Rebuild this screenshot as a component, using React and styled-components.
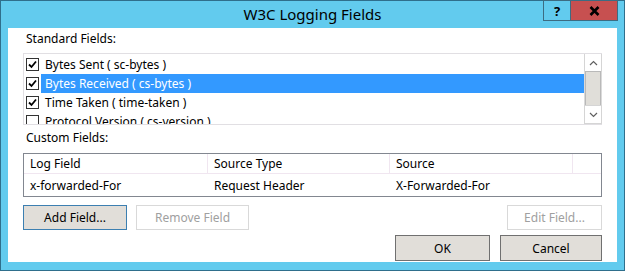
import React from 'react'
import styled, { createGlobalStyle } from 'styled-components'

/* Styled components: Start */

const Global = createGlobalStyle`
    body {
        margin: 0;
        font-family: 'Noto Sans', 'Open Sans', sans-serif;
        font-size: 12px;
        color: #000;
    }
`

const Window = styled.div`
    width: 625px;
    height: 271px;
    box-sizing: border-box;
    background: #62cbee;
    border: 1px solid #2f6f8c;
    display: flex;
    flex-direction: column;
`

const TitleBar = styled.div`
    height: 27px;
    display: grid;
    grid-template-columns: 1fr auto 1fr;
    align-items: start;
`

const Title = styled.div`
    grid-column: 2;
    font-size: 15px;
    line-height: 27px;
    color: #000;
`

const Caption = styled.div`
    grid-column: 3;
    justify-self: end;
    display: flex;
    margin-top: -1px;
    margin-right: 6px;
`

const CaptionButton = styled.div`
    width: ${({ wide }) => (wide ? 47 : 28)}px;
    height: 21px;
    box-sizing: border-box;
    background: ${({ wide }) => (wide ? '#c75050' : '#62cbee')};
    border: 1px solid #3c6c82;
    border-left-width: ${({ wide }) => (wide ? 0 : 1)}px;
    display: flex;
    align-items: center;
    justify-content: center;
    font-weight: bold;
    font-size: 13px;
`

const Panel = styled.div`
    margin: 0 7px;
    height: 234px;
    background: #fff;
    padding: 0 15px;
    display: flex;
    flex-direction: column;
`

const Label = styled.div`
    padding-left: 3px;
    line-height: 17px;
    margin-top: ${({ top }) => top}px;
`

const ListBox = styled.div`
    margin-top: 6px;
    height: 72px;
    box-sizing: border-box;
    border: 1px solid #e1dfe3;
    border-right: 0;
    display: flex;
    overflow: hidden;
`

const Rows = styled.div`
    flex: 1;
    overflow: hidden;
    padding-top: 1px;
`

const Row = styled.div`
    height: 19px;
    display: flex;
    align-items: center;
    padding-left: 2px;
`

const CheckBox = styled.div`
    width: 13px;
    height: 13px;
    box-sizing: border-box;
    border: 1px solid #333;
    background: #fff;
    display: flex;
    align-items: center;
    justify-content: center;
    flex: none;
`

const RowText = styled.div`
    margin-left: 2px;
    padding: 0 4px;
    height: 19px;
    line-height: 19px;
    white-space: nowrap;
    flex: ${({ selected }) => (selected ? 1 : 'none')};
    background: ${({ selected }) => (selected ? '#3399ff' : 'transparent')};
    color: ${({ selected }) => (selected ? '#fff' : '#000')};
`

const ScrollBar = styled.div`
    width: 18px;
    display: flex;
    flex-direction: column;
    border: 1px solid #dadada;
    border-top: 0;
    box-sizing: border-box;
`

const ScrollArrow = styled.div`
    height: 18px;
    box-sizing: border-box;
    border: 1px solid #fff;
    outline: 1px solid #d5d5d5;
    display: flex;
    align-items: center;
    justify-content: center;
    background: #fff;
`

const Track = styled.div`
    flex: 1;
    display: flex;
    flex-direction: column;
`

const Thumb = styled.div`
    height: 35px;
    background: #e0ded9;
    border: 1px solid #b9b9b9;
    box-sizing: border-box;
`

const Table = styled.div`
    margin-top: 7px;
    height: 44px;
    box-sizing: border-box;
    border: 1px solid #828790;
    display: grid;
    grid-template-columns: 184px 182px 183px 1fr;
    grid-template-rows: 20px 22px;
`

const Cell = styled.div`
    padding-left: 6px;
    display: flex;
    align-items: center;
    border-right: ${({ head, last }) => (head && !last ? '1px solid #f0e6f0' : 'none')};
    border-bottom: ${({ head }) => (head ? '1px solid #f0e6f0' : 'none')};
`

const ButtonRow = styled.div`
    display: flex;
    gap: ${({ gap }) => gap || 9}px;
    margin-top: ${({ top }) => top}px;
    justify-content: ${({ end }) => (end ? 'flex-end' : 'flex-start')};
    align-items: center;
`

const Button = styled.div`
    width: ${({ w }) => w}px;
    height: ${({ h }) => h || 25}px;
    box-sizing: border-box;
    display: flex;
    align-items: center;
    justify-content: center;
    background: ${({ disabled }) => (disabled ? '#fff' : '#e1ded9')};
    border: 1px solid ${({ disabled, primary }) => (disabled ? '#d9d9d9' : primary ? '#3c7fb1' : '#707070')};
    color: ${({ disabled }) => (disabled ? '#a0a0a0' : '#000')};
`

const Spacer = styled.div`
    flex: 1;
`

/* Styled components: End */

const Check = ({ checked }) => (
    <CheckBox>
        {checked && (
            <svg width="9" height="9" viewBox="0 0 9 9">
                <path d="M1 4.5 L3.5 7 L8 1.5" stroke="#000" strokeWidth="1.8" fill="none" />
            </svg>
        )}
    </CheckBox>
)

const Arrow = ({ up }) => (
    <svg width="9" height="6" viewBox="0 0 9 6">
        <path d={up ? 'M1 5 L4.5 1.5 L8 5' : 'M1 1 L4.5 4.5 L8 1'} stroke="#606060" strokeWidth="1.2" fill="none" />
    </svg>
)

const fields = [
    { text: 'Bytes Sent ( sc-bytes )', checked: true },
    { text: 'Bytes Received ( cs-bytes )', checked: true, selected: true },
    { text: 'Time Taken ( time-taken )', checked: true },
    { text: 'Protocol Version ( cs-version )', checked: false },
]

export default function App() {
    return (
        <>
            <Global />
            <Window>
                <TitleBar>
                    <Title>W3C Logging Fields</Title>
                    <Caption>
                        <CaptionButton>?</CaptionButton>
                        <CaptionButton wide>
                            <svg width="11" height="10" viewBox="0 0 11 10">
                                <path d="M1.5 1 L9.5 9 M9.5 1 L1.5 9" stroke="#000" strokeWidth="2.6" />
                            </svg>
                        </CaptionButton>
                    </Caption>
                </TitleBar>
                <Panel>
                    <Label top={2}>Standard Fields:</Label>
                    <ListBox>
                        <Rows>
                            {fields.map((f) => (
                                <Row key={f.text}>
                                    <Check checked={f.checked} />
                                    <RowText selected={f.selected}>{f.text}</RowText>
                                </Row>
                            ))}
                        </Rows>
                        <ScrollBar>
                            <ScrollArrow><Arrow up /></ScrollArrow>
                            <Track>
                                <Thumb />
                            </Track>
                            <ScrollArrow><Arrow /></ScrollArrow>
                        </ScrollBar>
                    </ListBox>
                    <Label top={4}>Custom Fields:</Label>
                    <Table>
                        <Cell head>Log Field</Cell>
                        <Cell head>Source Type</Cell>
                        <Cell head>Source</Cell>
                        <Cell head last />
                        <Cell>x-forwarded-For</Cell>
                        <Cell>Request Header</Cell>
                        <Cell>X-Forwarded-For</Cell>
                        <Cell />
                    </Table>
                    <ButtonRow top={8}>
                        <Button w={104} primary>Add Field...</Button>
                        <Button w={113} disabled>Remove Field</Button>
                        <Spacer />
                        <Button w={95} disabled>Edit Field...</Button>
                    </ButtonRow>
                    <ButtonRow top={5} end gap={10}>
                        <Button w={95} h={26}>OK</Button>
                        <Button w={102} h={26}>Cancel</Button>
                    </ButtonRow>
                </Panel>
            </Window>
        </>
    )
}
